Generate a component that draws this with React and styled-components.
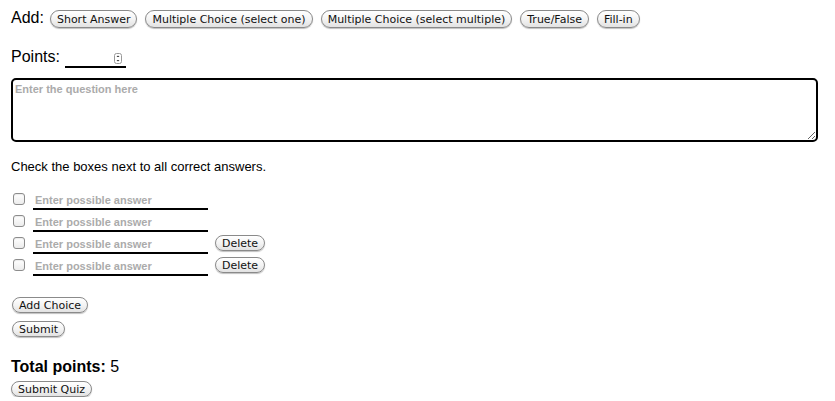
import styled, { createGlobalStyle } from "styled-components";

const GlobalStyle = createGlobalStyle`
  html, body {
    margin: 0;
    padding: 0;
    background: #fff;
    color: #000;
    font-family: "Liberation Sans", Arial, sans-serif;
  }
`;

const questionTypes = [
  "Short Answer",
  "Multiple Choice (select one)",
  "Multiple Choice (select multiple)",
  "True/False",
  "Fill-in",
];

const choices = [
  { deletable: false },
  { deletable: false },
  { deletable: true },
  { deletable: true },
];

export default function App() {
  return (
    <>
      <GlobalStyle />
      <Page>
        <AddRow>
          <Label>Add:</Label>
          {questionTypes.map((t) => (
            <PillButton key={t} $big>{t}</PillButton>
          ))}
        </AddRow>

        <PointsRow>
          <Label>Points:</Label>
          <PointsField>
            <PointsInput type="text" />
            <Spinner width="8" height="11" viewBox="0 0 8 11">
              <rect x="0.5" y="0.5" width="7" height="10" rx="2" fill="#fff" stroke="#999" />
              <path d="M2.5 4 L4 2.5 L5.5 4 Z" fill="#333" />
              <path d="M2.5 7 L4 8.5 L5.5 7 Z" fill="#333" />
            </Spinner>
          </PointsField>
        </PointsRow>

        <QuestionBox placeholder="Enter the question here" />

        <Hint>Check the boxes next to all correct answers.</Hint>

        <ChoiceList>
          {choices.map((c, i) => (
            <ChoiceRow key={i}>
              <CheckBox />
              <AnswerInput type="text" placeholder="Enter possible answer" />
              {c.deletable && <PillButton>Delete</PillButton>}
            </ChoiceRow>
          ))}
        </ChoiceList>

        <ActionStack>
          <PillButton>Add Choice</PillButton>
          <PillButton>Submit</PillButton>
        </ActionStack>

        <Total>
          <strong>Total points:</strong> 5
        </Total>
        <PillButton>Submit Quiz</PillButton>
      </Page>
    </>
  );
}

const Page = styled.div`
  display: flex;
  flex-direction: column;
  align-items: flex-start;
  padding: 10px 0 0 11px;
`;

const Label = styled.span`
  font-size: 16px;
  line-height: 18px;
`;

const AddRow = styled.div`
  display: flex;
  align-items: center;
  gap: 8px;
  height: 18px;

  & > span {
    margin-right: -2px;
    position: relative;
    top: -1px;
  }
`;

const PillButton = styled.button`
  box-sizing: border-box;
  height: ${(p) => (p.$big ? "18px" : "16px")};
  padding: 0 6px;
  margin: 0;
  border: 1px solid #8a8a8a;
  border-radius: 9px;
  background: linear-gradient(#ffffff 0%, #f4f4f4 50%, #e2e2e2 100%);
  box-shadow: 0 1px 1px rgba(0, 0, 0, 0.25);
  font-family: "DejaVu Sans", "Lucida Grande", sans-serif;
  font-size: 11px;
  line-height: 1;
  color: #111;
  white-space: nowrap;
  cursor: pointer;
`;

const PointsRow = styled.div`
  display: flex;
  align-items: flex-end;
  gap: 5px;
  margin-top: 20px;

  & > span {
    margin-bottom: 2px;
  }
`;

const PointsField = styled.div`
  display: flex;
  align-items: center;
  justify-content: space-between;
  width: 61px;
  height: 14px;
  border-bottom: 2px solid #000;
  padding-bottom: 1px;
`;

const PointsInput = styled.input`
  width: 40px;
  border: none;
  outline: none;
  padding: 0;
  font-size: 13px;
  background: transparent;
`;

const Spinner = styled.svg`
  display: block;
  margin-right: 4px;
`;

const QuestionBox = styled.textarea`
  box-sizing: border-box;
  width: 807px;
  height: 64px;
  margin-top: 10px;
  border: 2px solid #000;
  border-radius: 5px;
  padding: 3px 2px;
  resize: both;
  outline: none;
  font-family: "Liberation Sans", Arial, sans-serif;
  font-size: 11px;

  &::placeholder {
    color: #ababab;
    font-weight: bold;
  }
`;

const Hint = styled.p`
  margin: 17px 0 0;
  font-size: 13px;
  line-height: 15px;
`;

const ChoiceList = styled.div`
  display: flex;
  flex-direction: column;
  gap: 4px;
  margin-top: 16px;
`;

const ChoiceRow = styled.div`
  display: flex;
  align-items: center;
  height: 18px;
`;

const CheckBox = styled.span`
  box-sizing: border-box;
  width: 12px;
  height: 12px;
  margin: 0 8px 0 2px;
  border: 1px solid #8c8c8c;
  border-radius: 3px;
  background: linear-gradient(#ffffff, #ececec);
  box-shadow: inset 0 1px 1px rgba(0, 0, 0, 0.08);
`;

const AnswerInput = styled.input`
  box-sizing: border-box;
  width: 175px;
  height: 18px;
  margin-top: 4px;
  margin-right: 7px;
  padding: 0 2px;
  border: none;
  border-bottom: 2px solid #000;
  outline: none;
  font-family: "Liberation Sans", Arial, sans-serif;
  font-size: 11px;

  &::placeholder {
    color: #ababab;
    font-weight: bold;
  }
`;

const ActionStack = styled.div`
  display: flex;
  flex-direction: column;
  align-items: flex-start;
  gap: 8px;
  margin-top: 23px;
  margin-left: 1px;
`;

const Total = styled.div`
  margin-top: 21px;
  margin-bottom: 5px;
  font-size: 16px;
  line-height: 18px;
`;
